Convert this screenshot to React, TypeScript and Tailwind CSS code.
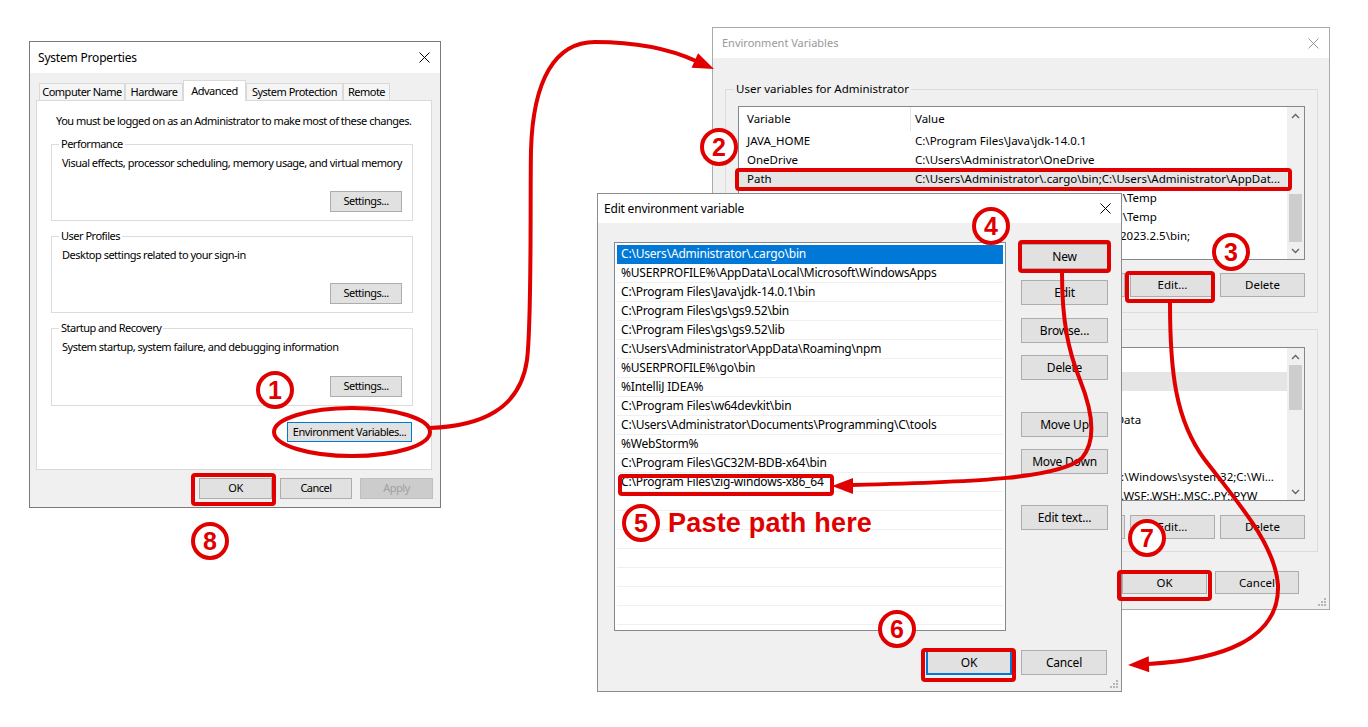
import React from "react";

const RED = "#e00000";

function CloseX({ color = "#000" }: { color?: string }) {
  return (
    <svg width="11" height="11" viewBox="0 0 11 11">
      <path d="M0.5 0.5L10.5 10.5M10.5 0.5L0.5 10.5" stroke={color} strokeWidth="1" />
    </svg>
  );
}

function Btn({ children, className = "" }: { children?: React.ReactNode; className?: string }) {
  return (
    <div className={"flex items-center justify-center border shrink-0 whitespace-nowrap " + className}>
      {children}
    </div>
  );
}

function Grip() {
  return (
    <svg width="8" height="8" viewBox="0 0 8 8" className="absolute right-[3px] bottom-[3px]">
      <rect x="6" y="0" width="2" height="2" fill="#b5b5b5" />
      <rect x="3" y="3" width="2" height="2" fill="#b5b5b5" />
      <rect x="6" y="3" width="2" height="2" fill="#b5b5b5" />
      <rect x="0" y="6" width="2" height="2" fill="#b5b5b5" />
      <rect x="3" y="6" width="2" height="2" fill="#b5b5b5" />
      <rect x="6" y="6" width="2" height="2" fill="#b5b5b5" />
    </svg>
  );
}

function Chevron({ up }: { up?: boolean }) {
  return (
    <svg width="9" height="6" viewBox="0 0 9 6">
      <path d={up ? "M1 5L4.5 1.5L8 5" : "M1 1L4.5 4.5L8 1"} stroke="#606060" strokeWidth="1.3" fill="none" />
    </svg>
  );
}

function GroupBox({ label, desc, hClass }: { label: string; desc: string; hClass: string }) {
  return (
    <div className={"relative border border-[#dcdcdc] flex flex-col px-[10px] pt-[11px] pb-[8px] " + hClass}>
      <span className="absolute left-[7px] top-[-8px] bg-white px-[2px] leading-[14px]">{label}</span>
      <div className="leading-[14px] whitespace-nowrap">{desc}</div>
      <div className="mt-auto self-end">
        <Btn className="w-[72px] h-[21px] border-[#adadad] bg-[#e1e1e1]">Settings...</Btn>
      </div>
    </div>
  );
}

function SystemProperties() {
  const tabs = ["Computer Name", "Hardware", "Advanced", "System Protection", "Remote"];
  const widths = ["w-[86px]", "w-[58px]", "w-[63px]", "w-[97px]", "w-[47px]"];
  return (
    <div className="absolute left-[29px] top-[41px] w-[412px] h-[467px] border border-[#7a7a7a] bg-[#f0f0f0] flex flex-col text-[11px] tracking-[-0.5px] text-black">
      <div className="h-[31px] bg-white flex items-center justify-between pl-[8px] pr-[10px] shrink-0">
        <span className="text-[12px] tracking-[-0.2px]">System Properties</span>
        <CloseX />
      </div>
      <div className="flex flex-col px-[6px] pt-[7px]">
        <div className="flex items-end h-[20px] pl-[3px]">
          {tabs.map((t, i) =>
            i === 2 ? (
              <div
                key={t}
                className={"h-[21px] -mb-[1px] bg-white border border-b-0 border-[#d9d9d9] flex items-center justify-center z-10 " + widths[i]}
              >
                {t}
              </div>
            ) : (
              <div
                key={t}
                className={"h-[17px] border border-b-0 border-[#d9d9d9] bg-[#f5f5f5] flex items-center justify-center " + widths[i]}
              >
                {t}
              </div>
            )
          )}
        </div>
        <div className="h-[370px] w-[396px] bg-white border border-[#d9d9d9] flex flex-col pl-[14px] pr-[18px]">
          <div className="mt-[13px] pl-[5px] leading-[14px] whitespace-nowrap">
            You must be logged on as an Administrator to make most of these changes.
          </div>
          <div className="flex flex-col gap-[15px] mt-[16px]">
            <GroupBox hClass="h-[77px]" label="Performance" desc="Visual effects, processor scheduling, memory usage, and virtual memory" />
            <GroupBox hClass="h-[77px]" label="User Profiles" desc="Desktop settings related to your sign-in" />
            <GroupBox hClass="h-[78px]" label="Startup and Recovery" desc="System startup, system failure, and debugging information" />
          </div>
          <div className="flex justify-end mt-[16px] pr-[1px]">
            <Btn className="w-[125px] h-[20px] border-[#0078d7] bg-[#e1e1e1]">Environment Variables...</Btn>
          </div>
        </div>
        <div className="flex justify-end gap-[8px] mt-[8px] pr-[1px]">
          <Btn className="w-[73px] h-[21px] border-[#adadad] bg-[#e1e1e1]">OK</Btn>
          <Btn className="w-[72px] h-[21px] border-[#adadad] bg-[#e1e1e1]">Cancel</Btn>
          <Btn className="w-[73px] h-[21px] border-[#bfbfbf] bg-[#cccccc] text-[#a0a0a0]">Apply</Btn>
        </div>
      </div>
    </div>
  );
}

function EnvList({
  rows,
  highlight,
  thumbClass,
}: {
  rows: [string, string][];
  highlight: number;
  thumbClass: string;
}) {
  return (
    <div className="flex border border-[#828790] bg-white h-[154px] w-[567px] shrink-0">
      <div className="flex-1 flex flex-col overflow-hidden">
        <div className="h-[24px] flex items-center shrink-0">
          <div className="w-[172px] pl-[8px] border-r border-[#e5e5e5] h-full flex items-center shrink-0">Variable</div>
          <div className="pl-[4px]">Value</div>
        </div>
        {rows.map((r, i) => (
          <div
            key={i}
            className={"h-[19px] flex items-center shrink-0 " + (i === highlight ? "bg-[#e5e5e5]" : "")}
          >
            <div className="w-[172px] pl-[8px] whitespace-nowrap overflow-hidden shrink-0">{r[0]}</div>
            <div className="pl-[4px] whitespace-nowrap">{r[1]}</div>
          </div>
        ))}
      </div>
      <div className="w-[17px] bg-[#f0f0f0] flex flex-col shrink-0">
        <div className="h-[17px] flex items-center justify-center">
          <Chevron up />
        </div>
        <div className="flex-1 flex flex-col px-[2px]">
          <div className={"bg-[#cdcdcd] " + thumbClass} />
        </div>
        <div className="h-[17px] flex items-center justify-center">
          <Chevron />
        </div>
      </div>
    </div>
  );
}

function EnvVariables() {
  const userRows: [string, string][] = [
    ["JAVA_HOME", "C:\\Program Files\\Java\\jdk-14.0.1"],
    ["OneDrive", "C:\\Users\\Administrator\\OneDrive"],
    ["Path", "C:\\Users\\Administrator\\.cargo\\bin;C:\\Users\\Administrator\\AppDat..."],
    ["TEMP", "C:\\Users\\Administrator\\AppData\\Local\\Temp"],
    ["TMP", "C:\\Users\\Administrator\\AppData\\Local\\Temp"],
    ["WebStorm", "C:\\Program Files\\JetBrains\\WebStorm 2023.2.5\\bin;"],
  ];
  const sysRows: [string, string][] = [
    ["asl.log", "Destination=file"],
    ["ComSpec", "C:\\Windows\\system32\\cmd.exe"],
    ["DriverData", "C:\\Windows\\System32\\Drivers\\DriverData"],
    ["NUMBER_OF_PROCESSORS", "8"],
    ["OS", "Windows_NT"],
    ["Path", "C:\\Program Files\\Python311\\Scripts\\;C:\\Windows\\system32;C:\\Wi..."],
    ["PATHEXT", ".COM;.EXE;.BAT;.CMD;.VBS;.VBE;.JS;.JSE;.WSF;.WSH;.MSC;.PY;.PYW"],
  ];
  const btn = "w-[85px] h-[24px] border-[#adadad] bg-[#e1e1e1]";
  return (
    <div className="absolute left-[712px] top-[27px] w-[618px] h-[583px] border border-[#aaaaaa] bg-[#f0f0f0] flex flex-col text-[11.5px] text-black">
      <div className="h-[30px] bg-white flex items-center justify-between pl-[9px] pr-[10px] shrink-0 text-[#999999] text-[11px]">
        <span>Environment Variables</span>
        <CloseX color="#999999" />
      </div>
      <div className="flex flex-col px-[12px] pt-[31px]">
        <div className="relative border border-[#dcdcdc] w-[593px] h-[224px] flex flex-col px-[12px] pt-[16px]">
          <span className="absolute left-[8px] top-[-8px] bg-[#f0f0f0] px-[2px] leading-[14px]">User variables for Administrator</span>
          <EnvList rows={userRows} highlight={2} thumbClass="mt-auto h-[48px]" />
          <div className="flex justify-end gap-[5px] mt-[13px]">
            <Btn className={btn}>New...</Btn>
            <Btn className={btn}>Edit...</Btn>
            <Btn className={btn}>Delete</Btn>
          </div>
        </div>
        <div className="relative border border-[#dcdcdc] w-[593px] h-[223px] flex flex-col px-[12px] pt-[17px] mt-[16px]">
          <span className="absolute left-[8px] top-[-8px] bg-[#f0f0f0] px-[2px] leading-[14px]">System variables</span>
          <EnvList rows={sysRows} highlight={0} thumbClass="h-[45px]" />
          <div className="flex justify-end gap-[5px] mt-[14px]">
            <Btn className={btn}>New...</Btn>
            <Btn className={btn}>Edit...</Btn>
            <Btn className={btn}>Delete</Btn>
          </div>
        </div>
        <div className="flex justify-end gap-[8px] mt-[19px] pr-[18px]">
          <Btn className="w-[85px] h-[23px] border-[#adadad] bg-[#e1e1e1]">OK</Btn>
          <Btn className="w-[84px] h-[23px] border-[#adadad] bg-[#e1e1e1]">Cancel</Btn>
        </div>
      </div>
      <Grip />
    </div>
  );
}

function EditDialog() {
  const paths = [
    "C:\\Users\\Administrator\\.cargo\\bin",
    "%USERPROFILE%\\AppData\\Local\\Microsoft\\WindowsApps",
    "C:\\Program Files\\Java\\jdk-14.0.1\\bin",
    "C:\\Program Files\\gs\\gs9.52\\bin",
    "C:\\Program Files\\gs\\gs9.52\\lib",
    "C:\\Users\\Administrator\\AppData\\Roaming\\npm",
    "%USERPROFILE%\\go\\bin",
    "%IntelliJ IDEA%",
    "C:\\Program Files\\w64devkit\\bin",
    "C:\\Users\\Administrator\\Documents\\Programming\\C\\tools",
    "%WebStorm%",
    "C:\\Program Files\\GC32M-BDB-x64\\bin",
    "C:\\Program Files\\zig-windows-x86_64",
    "",
    "",
    "",
    "",
    "",
    "",
    "",
    "",
  ];
  const btn = "w-[87px] h-[25px] border-[#adadad] bg-[#e1e1e1]";
  return (
    <div className="absolute left-[597px] top-[193px] w-[525px] h-[499px] border border-[#8c8c8c] bg-[#f0f0f0] flex flex-col text-[12px] tracking-[-0.2px] text-black">
      <div className="h-[29px] bg-white flex items-center justify-between pl-[6px] pr-[10px] shrink-0">
        <span>Edit environment variable</span>
        <CloseX />
      </div>
      <div className="flex px-[16px] pt-[19px] gap-[15px]">
        <div className="w-[392px] h-[389px] border border-[#828790] bg-white flex flex-col px-[2px] pt-[2px] overflow-hidden shrink-0">
          {paths.map((p, i) => (
            <div
              key={i}
              className={
                "h-[19px] shrink-0 flex items-center pl-[4px] border-b whitespace-nowrap " +
                (i === 0 ? "bg-[#0078d7] text-white border-[#0078d7]" : "border-[#f0f0f0]")
              }
            >
              {p}
            </div>
          ))}
        </div>
        <div className="flex flex-col pt-[2px]">
          <Btn className={btn}>New</Btn>
          <Btn className={btn + " mt-[11px]"}>Edit</Btn>
          <Btn className={btn + " mt-[13px]"}>Browse...</Btn>
          <Btn className={btn + " mt-[12px]"}>Delete</Btn>
          <Btn className={btn + " mt-[32px]"}>Move Up</Btn>
          <Btn className={btn + " mt-[12px]"}>Move Down</Btn>
          <Btn className={btn + " mt-[31px]"}>Edit text...</Btn>
        </div>
      </div>
      <div className="flex justify-end gap-[9px] mt-[19px] pr-[14px]">
        <Btn className="w-[86px] h-[25px] border-[#0078d7] border-[2px] bg-[#e1e1e1]">OK</Btn>
        <Btn className="w-[86px] h-[25px] border-[#adadad] bg-[#e1e1e1]">Cancel</Btn>
      </div>
      <Grip />
    </div>
  );
}

function head(tx: number, ty: number, deg: number, len = 21, w = 8) {
  const a = (deg * Math.PI) / 180;
  const bx = tx - Math.cos(a) * len;
  const by = ty - Math.sin(a) * len;
  const px = -Math.sin(a) * w;
  const py = Math.cos(a) * w;
  return `${tx},${ty} ${bx + px},${by + py} ${bx - px},${by - py}`;
}

function Overlay() {
  return (
    <svg className="absolute left-0 top-0 pointer-events-none" width="1368" height="727" viewBox="0 0 1368 727">
      <g stroke={RED} strokeWidth="4" fill="none" strokeLinecap="round" strokeLinejoin="round">
        <ellipse cx="352" cy="432" rx="78" ry="24" />
        <rect x="193" y="475" width="81" height="29" rx="2" />
        <rect x="737" y="170" width="553" height="19" rx="2" />
        <rect x="1127" y="273" width="86" height="28" rx="2" />
        <rect x="1119" y="572" width="91" height="27" rx="2" />
        <rect x="1020" y="242" width="89" height="29" rx="2" />
        <rect x="620" y="476" width="212" height="18" rx="2" />
        <rect x="923" y="650" width="91" height="30" rx="2" />
        <path d="M 430 428 C 480 426 520 410 527 360 C 532 320 530 200 531 150 C 533 80 555 42 595 42 C 640 42 672 50 696 61" />
        <path d="M 1062 273 C 1062 320 1068 350 1080 380 C 1092 410 1097 440 1082 458 C 1060 478 980 482 852 485" />
        <path d="M 1170 303 C 1170 370 1175 420 1205 460 C 1240 505 1275 545 1278 585 C 1280 640 1220 660 1148 664" />
      </g>
      <g fill={RED}>
        <polygon points={head(714, 69, 24)} />
        <polygon points={head(832, 486, 180)} />
        <polygon points={head(1128, 665, 178)} />
      </g>
    </svg>
  );
}

function Num({ n, pos }: { n: string; pos: string }) {
  return (
    <div
      className={
        "absolute w-[38px] h-[38px] rounded-full border-[4px] border-[#e00000] bg-white text-[#e00000] flex items-center justify-center font-['Liberation_Sans',Arial,sans-serif] font-bold text-[25px] leading-none " +
        pos
      }
    >
      {n}
    </div>
  );
}

export default function App() {
  return (
    <div className="relative w-[1368px] h-[727px] bg-white overflow-hidden font-['Noto_Sans',sans-serif]">
      <SystemProperties />
      <EnvVariables />
      <EditDialog />
      <Overlay />
      <Num n="1" pos="left-[256px] top-[371px]" />
      <Num n="2" pos="left-[700px] top-[128px]" />
      <Num n="3" pos="left-[1212px] top-[233px]" />
      <Num n="4" pos="left-[972px] top-[207px]" />
      <Num n="5" pos="left-[622px] top-[504px]" />
      <Num n="6" pos="left-[878px] top-[610px]" />
      <Num n="7" pos="left-[1128px] top-[519px]" />
      <Num n="8" pos="left-[191px] top-[522px]" />
      <div className="absolute left-[668px] top-[508px] text-[#e00000] font-['Liberation_Sans',Arial,sans-serif] font-bold text-[27px] tracking-[0.2px] leading-[30px] whitespace-nowrap">
        Paste path here
      </div>
    </div>
  );
}
